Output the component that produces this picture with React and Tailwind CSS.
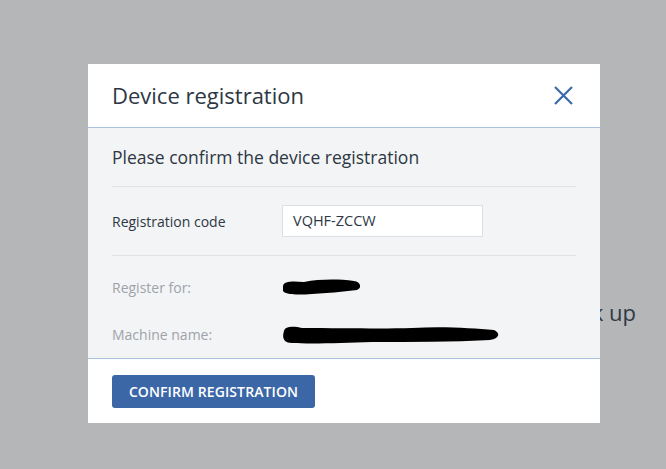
import React from "react";

const font = { fontFamily: '"Open Sans", "Noto Sans", sans-serif' };

const Redaction = ({ width, d }) => (
    <svg width={width} height="20" viewBox={`0 0 ${width} 20`} className="block">
        <path d={d} fill="#000" />
    </svg>
);

const InfoRow = ({ label, children }) => (
    <div className="flex h-[47px] items-center">
        <div className="w-[170px] text-[14px] text-[#9ea3a9]">{label}</div>
        <div className="flex-1">{children}</div>
    </div>
);

export default function App() {
    return (
        <div className="relative h-[469px] w-[666px] overflow-hidden bg-[#b5b6b8]" style={font}>
            {/* page content behind the dialog */}
            <div className="absolute right-[30px] top-[296px] text-[22px] text-[#2f3945]">back up</div>

            <div className="absolute left-[88px] top-[64px] flex w-[512px] flex-col bg-white">
                <div className="flex h-[64px] items-center justify-between border-b border-[#a9c2de] px-6">
                    <h1 className="text-[22px] text-[#2d3743]">Device registration</h1>
                    <button className="mr-[3px] text-[#3b6aa8]">
                        <svg width="19" height="19" viewBox="0 0 19 19" fill="none" stroke="currentColor" strokeWidth="2.2">
                            <path d="M1 1L18 18M18 1L1 18" />
                        </svg>
                    </button>
                </div>

                <div className="flex flex-col bg-[#f3f4f5] px-6 pt-[17px]">
                    <div className="text-[17.5px] leading-[24px] text-[#2d3743]">Please confirm the device registration</div>
                    <div className="mt-[17px] h-px bg-[#dfe1e4]" />
                    <div className="flex items-center py-[18px]">
                        <div className="w-[170px] text-[14px] text-[#2d3743]">Registration code</div>
                        <div className="flex h-[32px] w-[201px] items-center border border-[#dcdfe3] bg-white px-[10px] text-[14.5px] text-[#2d3743]">
                            VQHF-ZCCW
                        </div>
                    </div>
                    <div className="h-px bg-[#dfe1e4]" />
                    <div className="flex flex-col pt-[8px]">
                        <InfoRow label="Register for:">
                            <Redaction width={80} d="M1 8 C2 3 10 3 22 4 C38 1 56 1 72 3 C79 4 80 10 75 12 C60 14 44 15 30 16 C16 17 4 17 1 13 Z" />
                        </InfoRow>
                        <InfoRow label="Machine name:">
                            <Redaction width={218} d="M2 6 C3 1 12 1 20 3 C60 3 100 4 130 3 C160 1 190 3 212 5 C219 8 217 14 208 15 C170 17 130 17 90 17 C60 18 30 19 10 18 C1 18 0 12 2 6 Z" />
                        </InfoRow>
                    </div>
                </div>

                <div className="flex h-[65px] items-start border-t border-[#a9c2de] px-6 pt-[16px]">
                    <button className="h-[33px] w-[203px] rounded-[3px] bg-[#3b67a7] text-[14px] font-semibold tracking-[0.1px] text-white">
                        CONFIRM REGISTRATION
                    </button>
                </div>
            </div>
        </div>
    );
}
